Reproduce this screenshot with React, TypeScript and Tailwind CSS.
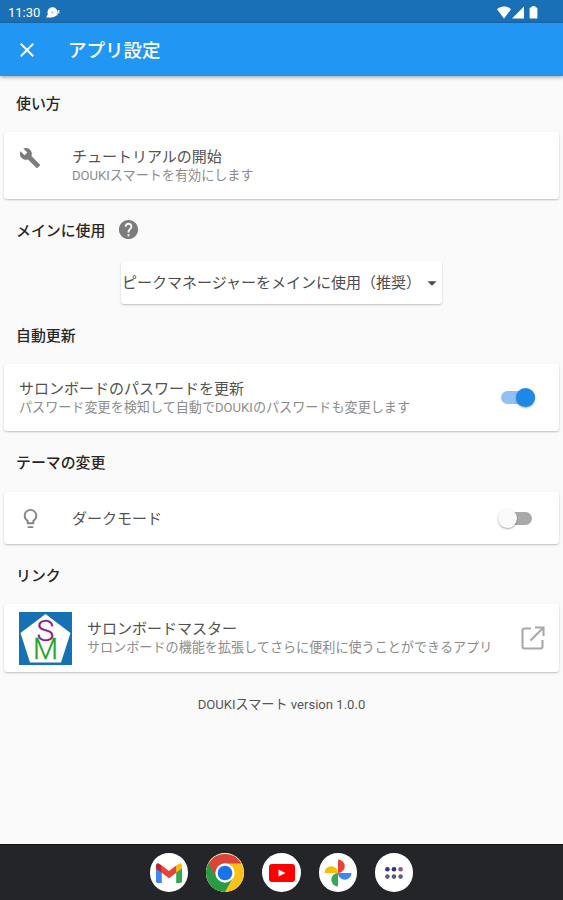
import { useState } from 'react'
import type { ReactNode } from 'react'
import clsx from 'clsx'
import { MdArrowDropDown, MdBuild, MdClose, MdHelp, MdLightbulbOutline } from 'react-icons/md'

function StatusBar() {
  return (
    <div className="flex h-[23px] items-center justify-between bg-[#1a70b7] pt-[2px] pr-[25px] pl-2 text-white">
      <div className="flex items-center gap-[6px]">
        <span className="text-[13px] leading-none">11:30</span>
        <svg width="14" height="12" viewBox="0 0 14 12" fill="currentColor">
          <circle cx="6.5" cy="5.2" r="5" />
          <path d="M.2 10.600 2.400 6l5 4-2.500.6z" />
          <path d="M10 3.400h1.500v5H10zM12 3h1.500v3.500H12z" opacity=".8" />
          <circle cx="6.500" cy="5.400" r="1" fill="#8fbbe0" />
        </svg>
      </div>
      <div className="flex items-center">
        <svg width="14" height="13" viewBox="0 0 14 13" fill="currentColor">
          <path d="M0 3.200C2 1.300 4.300.4 7 .4s5 .9 7 2.800L7 12.600z" />
        </svg>
        <svg width="13" height="13" viewBox="0 0 13 13" className="ml-px" fill="currentColor">
          <path d="M12 .6v12H0z" />
        </svg>
        <svg width="9" height="13" viewBox="0 0 9 13" className="ml-[4px]" fill="currentColor">
          <path d="M2.500 1.500V.2h4v1.300h1c.5 0 .9.4.9.9v9.300c0 .5-.4.900-.9.900h-6c-.5 0-.9-.4-.9-.9V2.400c0-.5.4-.9.9-.9z" />
        </svg>
      </div>
    </div>
  )
}

function SectionTitle({ children, className }: { children: ReactNode; className: string }) {
  return (
    <h2 className={clsx('flex items-center pl-4 text-[14.900px] leading-5 font-medium text-[#262626]', className)}>
      {children}
    </h2>
  )
}

function Card({ children, className }: { children: ReactNode; className: string }) {
  return (
    <div className={clsx('mx-1 flex items-center rounded-[3px] bg-white shadow-[0_1px_2px_rgba(0,0,0,0.24)]', className)}>
      {children}
    </div>
  )
}

function Label({ title, subtitle }: { title: string; subtitle?: string }) {
  return (
    <div className="flex-1 whitespace-nowrap">
      <p className="text-[15px] leading-5 text-[#525252]">{title}</p>
      {subtitle && <p className="text-[13.100px] leading-[18px] text-[#8c8c8c]">{subtitle}</p>}
    </div>
  )
}

function Toggle({ checked, onChange }: { checked: boolean; onChange: (v: boolean) => void }) {
  return (
    <button
      role="switch"
      aria-checked={checked}
      onClick={() => onChange(!checked)}
      className={clsx('flex h-[13px] items-center rounded-full', checked ? 'w-[34px] justify-end bg-[#8fc1f3]' : 'w-[31px] justify-start bg-[#a9a9a9]')}
    >
      <span
        className={clsx(
          'size-[19px] shrink-0 rounded-full shadow-[0_1px_2px_rgba(0,0,0,0.35)]',
          checked ? 'bg-[#1e88e5]' : '-ml-[3px] bg-[#fafafa]',
        )}
      />
    </button>
  )
}

function SalonMasterLogo() {
  return (
    <svg width="53" height="53" viewBox="0 0 53 53" className="shrink-0">
      <rect width="53" height="53" fill="#1670b4" />
      <path d="M26.500 2 51.500 21 42 50.500H11L1.500 21z" fill="#fff" />
      <text x="26.500" y="28.500" textAnchor="middle" fontFamily="Roboto" fontWeight="300" fontSize="30" fill="#8a1a8f" stroke="#8a1a8f" strokeWidth=".3">S</text>
      <text x="26.500" y="46.500" textAnchor="middle" fontFamily="Roboto" fontWeight="300" fontSize="29" fill="#1ea32b" stroke="#1ea32b" strokeWidth=".3">M</text>
    </svg>
  )
}

function GmailIcon() {
  return (
    <svg width="26" height="20" viewBox="0 0 26 20">
      <path d="M0 4.500 5.800 8.800V20H1.800A1.800 1.800 0 0 1 0 18.200z" fill="#4285f4" />
      <path d="M26 4.500 20.200 8.800V20h4a1.800 1.800 0 0 0 1.800-1.800z" fill="#34a853" />
      <path d="M20.200 2.500 23 .7C24.800-.3 26 1 26 2.800v2.600l-5.800 4.400z" fill="#fbbc04" />
      <path d="M5.800 2.500 3 .7C1.200-.3 0 1 0 2.800v2.600l5.800 4.400z" fill="#c5221f" />
      <path d="M5.800 2.500 13 7.900l7.200-5.400v7.300L13 15.200 5.800 9.800z" fill="#ea4335" />
    </svg>
  )
}

function ChromeIcon() {
  return (
    <svg width="38" height="38" viewBox="0 0 38 38">
      <circle cx="19" cy="19" r="19" fill="#fbc116" />
      <path d="M19 19 2.540 9.500A19 19 0 0 0 19 38l8-14.500z" fill="#2a9a45" />
      <path d="M2.540 9.500A19 19 0 0 1 35.460 9.500H19L11 24z" fill="#db4437" />
      <circle cx="19" cy="19" r="9.700" fill="#fff" />
      <circle cx="19" cy="19" r="7.300" fill="#1a73e8" />
    </svg>
  )
}

function YoutubeIcon() {
  return (
    <svg width="26" height="18" viewBox="0 0 26 18">
      <rect width="26" height="18" rx="3" fill="#f00" />
      <path d="M9.500 5.500v7L16.500 9z" fill="#fff" />
    </svg>
  )
}

function PhotosIcon() {
  return (
    <svg width="28" height="28" viewBox="0 0 28 28">
      <path d="M14 .5a6.700 6.700 0 0 1 0 13.500z" fill="#ea4335" />
      <path d="M27.500 14a6.700 6.700 0 0 1-13.500 0z" fill="#4285f4" />
      <path d="M14 27.500a6.700 6.700 0 0 1 0-13.500z" fill="#34a853" />
      <path d="M.5 14a6.700 6.700 0 0 1 13.500 0z" fill="#fbbc04" />
    </svg>
  )
}

function AppsIcon() {
  return (
    <svg width="18" height="12" viewBox="0 0 18 12">
      <circle cx="2.400" cy="2.300" r="2.300" fill="#2c3a8c" />
      <circle cx="9" cy="2.300" r="2.300" fill="#2f2f80" />
      <circle cx="15.600" cy="2.300" r="2.300" fill="#8c5a78" />
      <circle cx="2.400" cy="9.600" r="2.300" fill="#5f6080" />
      <circle cx="9" cy="9.600" r="2.300" fill="#55567a" />
      <circle cx="15.600" cy="9.600" r="2.300" fill="#5f6078" />
    </svg>
  )
}

const dock = [
  { name: 'Gmail', icon: <GmailIcon /> },
  { name: 'Chrome', icon: <ChromeIcon /> },
  { name: 'YouTube', icon: <YoutubeIcon /> },
  { name: 'Photos', icon: <PhotosIcon /> },
  { name: 'Apps', icon: <AppsIcon /> },
]

export default function App() {
  const [autoUpdate, setAutoUpdate] = useState(true)
  const [darkMode, setDarkMode] = useState(false)

  return (
    <div className="flex h-[900px] w-[563px] flex-col overflow-hidden bg-[#fafafa] font-[Roboto,'Noto_Sans_CJK_JP',sans-serif]">
      <StatusBar />
      <header className="z-10 flex h-[53px] shrink-0 items-center bg-[#2196f3] pl-[15px] text-white shadow-[0_1px_4px_rgba(0,0,0,0.4)]">
        <MdClose size={24} />
        <h1 className="ml-[29px] pt-[3px] text-[18.500px] leading-none font-medium">アプリ設定</h1>
      </header>

      <main className="flex flex-1 flex-col">
        <SectionTitle className="h-14">使い方</SectionTitle>
        <Card className="h-[67px] pl-[15px]">
          <MdBuild size={22} className="mb-[15px] text-[#7c7c7c]" />
          <div className="ml-[31px] flex flex-1">
            <Label title="チュートリアルの開始" subtitle="DOUKIスマートを有効にします" />
          </div>
        </Card>

        <SectionTitle className="h-[62px] pt-[2px]">
          メインに使用
          <MdHelp size={23} className="mb-[3px] ml-3 text-[#7c7c7c]" />
        </SectionTitle>
        <button className="flex h-[43px] w-[321px] items-center self-center rounded-[3px] bg-white pt-[2px] pl-px text-[15px] whitespace-nowrap text-[#4d4d4d] shadow-[0_1px_2px_rgba(0,0,0,0.24)]">
          ピークマネージャーをメインに使用（推奨）
          <MdArrowDropDown size={22} className="mb-[2px] ml-auto shrink-0" />
        </button>

        <SectionTitle className="h-[60px] pt-[3px]">自動更新</SectionTitle>
        <Card className="h-[67px] pr-[24px] pl-[15px]">
          <Label title="サロンボードのパスワードを更新" subtitle="パスワード変更を検知して自動でDOUKIのパスワードも変更します" />
          <Toggle checked={autoUpdate} onChange={setAutoUpdate} />
        </Card>

        <SectionTitle className="h-[61px] pt-[3px]">テーマの変更</SectionTitle>
        <Card className="h-[52px] pr-[27px] pl-[15px]">
          <MdLightbulbOutline size={23} className="mr-[30px] text-[#858585]" />
          <div className="flex flex-1 pt-[2px]">
            <Label title="ダークモード" />
          </div>
          <Toggle checked={darkMode} onChange={setDarkMode} />
        </Card>

        <SectionTitle className="h-[60px] pt-[3px]">リンク</SectionTitle>
        <Card className="h-[68px] pr-[14px] pl-[15px]">
          <SalonMasterLogo />
          <div className="ml-[15px] flex flex-1">
            <Label title="サロンボードマスター" subtitle="サロンボードの機能を拡張してさらに便利に使うことができるアプリ" />
          </div>
          <svg width="24" height="24" viewBox="0 0 24 24" fill="none" stroke="#a8a8a8" strokeWidth="2.100">
            <path d="M10 2.500H3.500a2 2 0 0 0-2 2v16a2 2 0 0 0 2 2h16a2 2 0 0 0 2-2V14" />
            <path d="M14 1.500h8.500V10M22.500 1.500 9.500 14.500" />
          </svg>
        </Card>
        <p className="pt-[23px] text-center text-[13.100px] leading-5 text-[#555]">DOUKIスマート version 1.0.0</p>
      </main>

      <nav className="flex h-14 shrink-0 items-center justify-center gap-[18px] border-t border-[#111] bg-[#242529]">
        {dock.map((app) => (
          <button key={app.name} aria-label={app.name} className="flex size-[38.200px] items-center justify-center overflow-hidden rounded-full bg-white">
            {app.icon}
          </button>
        ))}
      </nav>
    </div>
  )
}
